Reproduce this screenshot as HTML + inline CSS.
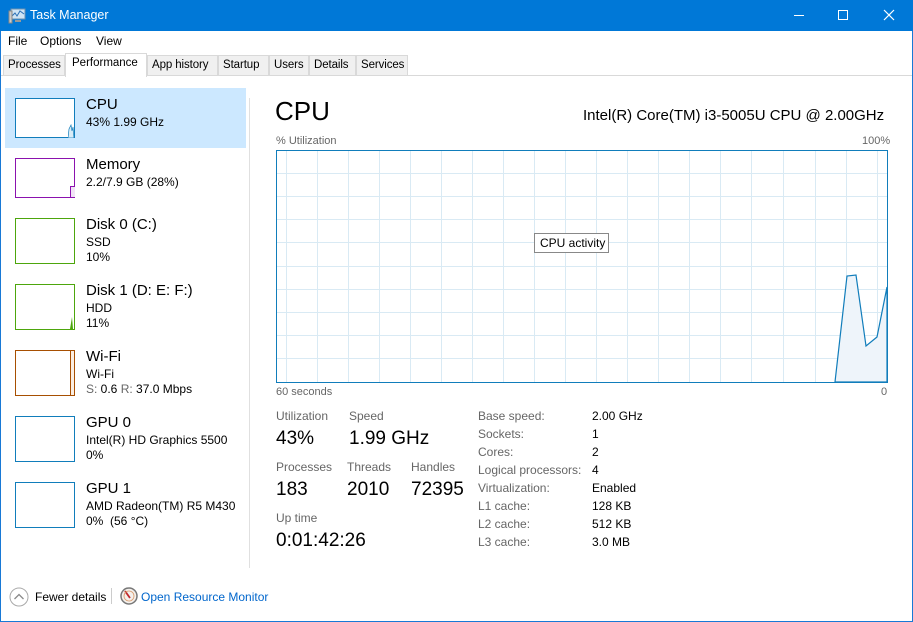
<!DOCTYPE html>
<html><head><style>
*{margin:0;padding:0;box-sizing:border-box}
body{width:913px;height:622px;overflow:hidden;background:#fff;font-family:"Liberation Sans",sans-serif;font-size:12px;color:#000;position:relative}
.a{position:absolute;white-space:nowrap}
.g{color:#666}
.th{position:absolute;left:15px;width:60px;border:1px solid}
.t1{font-size:15px}
.big{font-size:19px}
.tab{position:absolute;top:55px;height:21px;background:#f0f0f0;border:1px solid #d9d9d9;font-size:11.5px;padding:3px 0 0 4px;letter-spacing:-0.1px}
</style></head><body>
<div class="a" style="left:0;top:0;width:913px;height:622px;border:1px solid #1879d6"></div>
<div class="a" style="left:0;top:0;width:913px;height:31px;background:#0078d7"></div>
<svg class="a" style="left:8px;top:8px" width="18" height="16"><rect x="3" y="1" width="14" height="10" fill="#cfe4f5" stroke="#6a8fb0"/><polyline points="4,8 7,5 9,8 12,3 16,6" fill="none" stroke="#2a6fb5"/><rect x="1" y="3" width="3" height="12" fill="#ccc" stroke="#888"/><rect x="7" y="12" width="6" height="2" fill="#999"/></svg>
<div class="a" style="left:30px;top:8px;color:#fff;font-size:12.5px">Task Manager</div>
<div class="a" style="left:794px;top:15px;width:10px;height:1px;background:#fff"></div>
<div class="a" style="left:838px;top:10px;width:10px;height:10px;border:1px solid #fff"></div>
<svg class="a" style="left:883px;top:9px" width="12" height="12"><path d="M1 1L11 11M11 1L1 11" stroke="#fff" stroke-width="1.2"/></svg>
<div class="a" style="left:8px;top:34px">File</div>
<div class="a" style="left:40px;top:34px">Options</div>
<div class="a" style="left:96px;top:34px">View</div>
<div class="a" style="left:1px;top:75px;width:911px;height:1px;background:#d9d9d9"></div>
<div class="tab" style="left:3px;width:62px">Processes</div>
<div class="tab" style="left:147px;width:71px">App history</div>
<div class="tab" style="left:218px;width:51px">Startup</div>
<div class="tab" style="left:269px;width:40px">Users</div>
<div class="tab" style="left:309px;width:47px">Details</div>
<div class="tab" style="left:356px;width:52px">Services</div>
<div class="a" style="left:65px;top:53px;width:82px;height:24px;background:#fff;border:1px solid #d9d9d9;border-bottom:none;padding:3px 0 0 6px;font-size:11.5px">Performance</div>
<div class="a" style="left:5px;top:88px;width:241px;height:60px;background:#cce8ff"></div>
<div class="a" style="left:249px;top:98px;width:1px;height:470px;background:#e0e0e0"></div>

<div class="th" style="top:98px;height:40px;border-color:#117dbb;background:#fff"><svg class="a" style="left:52px;top:18px" width="6" height="21"><path d="M0 21L1 12L3 8L4 14L5 10L6 21Z" fill="#d9ecf7" stroke="#117dbb" stroke-width=".7"/></svg></div>
<div class="a t1" style="left:86px;top:96px">CPU</div><div class="a" style="left:86px;top:115px">43% 1.99 GHz</div>

<div class="th" style="top:158px;height:40px;border-color:#8b12ae"><div class="a" style="left:54px;top:27px;width:5px;height:11px;background:#f1e3f6;border-left:1px solid #8b12ae;border-top:1px solid #8b12ae"></div></div>
<div class="a t1" style="left:86px;top:156px">Memory</div><div class="a" style="left:86px;top:175px">2.2/7.9 GB (28%)</div>

<div class="th" style="top:218px;height:46px;border-color:#4da60c"></div>
<div class="a t1" style="left:86px;top:216px">Disk 0 (C:)</div><div class="a" style="left:86px;top:235px">SSD</div><div class="a" style="left:86px;top:250px">10%</div>

<div class="th" style="top:284px;height:46px;border-color:#4da60c"><svg class="a" style="left:54px;top:28px" width="5" height="16"><path d="M0 16L2 4L3 16Z" fill="#4da60c"/></svg></div>
<div class="a t1" style="left:86px;top:282px">Disk 1 (D: E: F:)</div><div class="a" style="left:86px;top:301px">HDD</div><div class="a" style="left:86px;top:316px">11%</div>

<div class="th" style="top:350px;height:46px;border-color:#a74f01"><div class="a" style="left:54px;top:0;width:4px;height:44px;background:#fbeee2;border-left:1px solid #a74f01"></div></div>
<div class="a t1" style="left:86px;top:348px">Wi-Fi</div><div class="a" style="left:86px;top:367px">Wi-Fi</div><div class="a" style="left:86px;top:382px"><span class="g">S:</span> 0.6 <span class="g">R:</span> 37.0 Mbps</div>

<div class="th" style="top:416px;height:46px;border-color:#117dbb"></div>
<div class="a t1" style="left:86px;top:414px">GPU 0</div><div class="a" style="left:86px;top:433px">Intel(R) HD Graphics 5500</div><div class="a" style="left:86px;top:448px">0%</div>

<div class="th" style="top:482px;height:46px;border-color:#117dbb"></div>
<div class="a t1" style="left:86px;top:480px">GPU 1</div><div class="a" style="left:86px;top:499px">AMD Radeon(TM) R5 M430</div><div class="a" style="left:86px;top:514px">0% &nbsp;(56 °C)</div>

<div class="a" style="left:275px;top:96px;font-size:26px">CPU</div>
<div class="a" style="left:583px;top:107px;font-size:15px">Intel(R) Core(TM) i3-5005U CPU @ 2.00GHz</div>
<div class="a g" style="left:276px;top:135px;font-size:11px">% Utilization</div>
<div class="a g" style="left:862px;top:135px;font-size:11px">100%</div>
<svg class="a" style="left:276px;top:150px" width="612" height="233">
<g stroke="#d9eaf4" stroke-width="1">
<path d="M0 23.5H612M0 46.5H612M0 69.5H612M0 92.5H612M0 116.5H612M0 139.5H612M0 162.5H612M0 185.5H612M0 208.5H612"/>
<path d="M10.5 0V233M41.5 0V233M72.5 0V233M103.5 0V233M134.5 0V233M165.5 0V233M196.5 0V233M227.5 0V233M258.5 0V233M289.5 0V233M320.5 0V233M351.5 0V233M382.5 0V233M413.5 0V233M444.5 0V233M475.5 0V233M507.5 0V233M539.5 0V233M570.5 0V233M601.5 0V233"/>
</g>
<path d="M559 232L571 126L580 125L590 196L601 187L611 137L611 232Z" fill="#eef4fa" stroke="#117dbb" stroke-width="1.2"/>
<rect x="0.5" y="0.5" width="611" height="232" fill="none" stroke="#117dbb"/>
</svg>
<div class="a" style="left:534px;top:233px;width:75px;height:20px;border:1px solid #888;background:#fff;padding:2px 0 0 5px">CPU activity</div>
<div class="a g" style="left:276px;top:386px;font-size:11px">60 seconds</div>
<div class="a g" style="left:881px;top:386px;font-size:11px">0</div>

<div class="a g" style="left:276px;top:409px">Utilization</div><div class="a g" style="left:349px;top:409px">Speed</div>
<div class="a big" style="left:276px;top:428px">43%</div><div class="a big" style="left:349px;top:428px">1.99 GHz</div>
<div class="a g" style="left:276px;top:460px">Processes</div><div class="a g" style="left:347px;top:460px">Threads</div><div class="a g" style="left:411px;top:460px">Handles</div>
<div class="a big" style="left:276px;top:479px">183</div><div class="a big" style="left:347px;top:479px">2010</div><div class="a big" style="left:411px;top:479px">72395</div>
<div class="a g" style="left:276px;top:511px">Up time</div>
<div class="a big" style="left:276px;top:530px">0:01:42:26</div>

<div class="a g" style="left:478px;top:407px;line-height:18px">Base speed:<br>Sockets:<br>Cores:<br>Logical processors:<br>Virtualization:<br>L1 cache:<br>L2 cache:<br>L3 cache:</div>
<div class="a" style="left:592px;top:407px;line-height:18px">2.00 GHz<br>1<br>2<br>4<br>Enabled<br>128 KB<br>512 KB<br>3.0 MB</div>

<svg class="a" style="left:9px;top:587px" width="20" height="20"><circle cx="10" cy="10" r="9" fill="#fff" stroke="#aaa"/><path d="M5.5 12L10 7.5L14.5 12" fill="none" stroke="#888" stroke-width="1.3"/></svg>
<div class="a" style="left:35px;top:590px">Fewer details</div>
<div class="a" style="left:111px;top:588px;width:1px;height:16px;background:#ccc"></div>
<svg class="a" style="left:120px;top:587px" width="18" height="18"><circle cx="9" cy="9" r="8" fill="#f4f0ec" stroke="#777" stroke-width="1.5"/><path d="M5 4L10 11" stroke="#c0282d" stroke-width="1.8"/><circle cx="9" cy="9" r="5" fill="none" stroke="#d99a6a" stroke-width=".8"/></svg>
<div class="a" style="left:141px;top:590px;color:#0066cc">Open Resource Monitor</div>
</body></html>
